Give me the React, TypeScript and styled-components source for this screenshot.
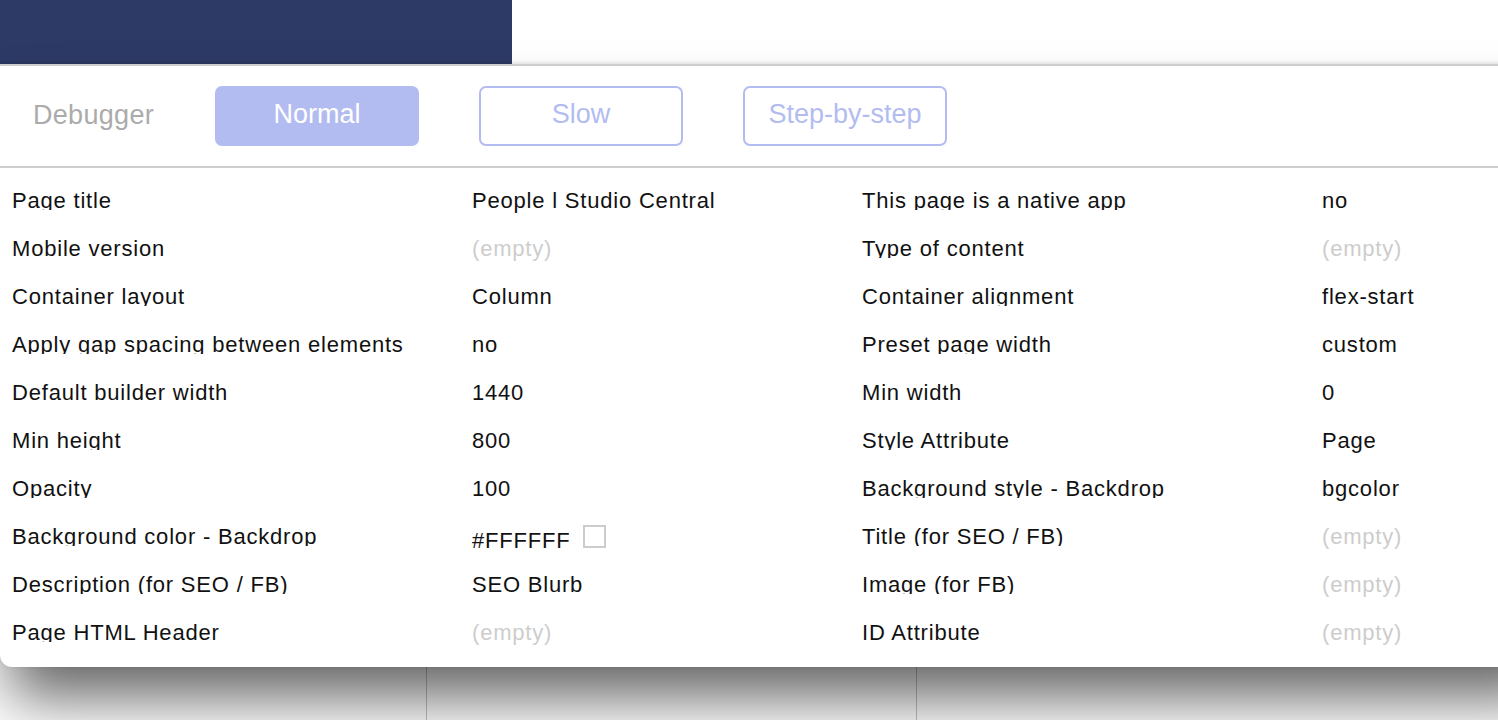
import React from 'react';
import styled, { createGlobalStyle } from 'styled-components';

const GlobalStyle = createGlobalStyle`
  html, body {
    margin: 0;
    padding: 0;
    background: #fff;
  }
  body {
    font-family: 'Liberation Sans', Arial, Helvetica, sans-serif;
    -webkit-font-smoothing: antialiased;
  }
`;

const Page = styled.div`
  position: relative;
  width: 100%;
  height: 720px;
  overflow: hidden;
  background: #fff;
`;

const TopBar = styled.div`
  display: flex;
  height: 64px;
`;

const Brand = styled.div`
  width: 512px;
  background: #2e3a66;
`;

const Columns = styled.div`
  display: grid;
  grid-template-columns: 427px 490px 1fr;
  height: 656px;
`;

const Column = styled.div`
  border-right: 1px solid #c4c4c4;
  &:last-child {
    border-right: none;
  }
`;

const Panel = styled.div`
  position: absolute;
  top: 64px;
  left: 0;
  width: 1560px;
  height: 603px;
  box-sizing: border-box;
  background: #fff;
  border-top: 2px solid #cfcfcf;
  border-bottom-left-radius: 12px;
  box-shadow: 0 -1px 4px rgba(0, 0, 0, 0.12), 0 40px 60px -10px rgba(0, 0, 0, 0.62);
  display: flex;
  flex-direction: column;
  overflow: hidden;
`;

const Header = styled.div`
  display: flex;
  align-items: center;
  gap: 60px;
  height: 100px;
  flex-shrink: 0;
  padding-left: 33px;
  border-bottom: 2px solid #cfcfcf;
`;

const Title = styled.div`
  width: 122px;
  font-size: 27px;
  letter-spacing: 0.3px;
  color: #ababab;
  margin-top: -2px;
`;

const ModeButton = styled.button<{ $active?: boolean }>`
  width: 204px;
  height: 60px;
  box-sizing: border-box;
  border: 2px solid #b3bcf0;
  border-radius: 7px;
  background: ${(p) => (p.$active ? '#b3bcf0' : '#fff')};
  color: ${(p) => (p.$active ? '#fff' : '#b3bcf0')};
  font-family: 'Liberation Sans', Arial, sans-serif;
  font-size: 27px;
  padding: 0 0 3px;
  cursor: pointer;
`;

const Body = styled.div`
  display: grid;
  grid-template-columns: 460px 390px 460px 390px;
  grid-auto-rows: 48px;
  padding: 21px 0 0 12px;
  font-size: 22px;
  letter-spacing: 0.8px;
  line-height: 24px;
  color: #111;
`;

const Label = styled.div`
  height: 21px;
  overflow: hidden;
  white-space: nowrap;
`;

const Value = styled.div<{ $empty?: boolean }>`
  white-space: nowrap;
  color: ${(p) => (p.$empty ? '#cdcdcd' : '#111')};
`;

const Swatch = styled.span<{ $color: string }>`
  display: inline-block;
  width: 23px;
  height: 23px;
  box-sizing: border-box;
  margin-left: 13px;
  border: 2px solid #cccccc;
  background: ${(p) => p.$color};
`;

type Field = { label: string; value?: string; swatch?: string };

const rows: [Field, Field][] = [
  [{ label: 'Page title', value: 'People l Studio Central' }, { label: 'This page is a native app', value: 'no' }],
  [{ label: 'Mobile version' }, { label: 'Type of content' }],
  [{ label: 'Container layout', value: 'Column' }, { label: 'Container alignment', value: 'flex-start' }],
  [{ label: 'Apply gap spacing between elements', value: 'no' }, { label: 'Preset page width', value: 'custom' }],
  [{ label: 'Default builder width', value: '1440' }, { label: 'Min width', value: '0' }],
  [{ label: 'Min height', value: '800' }, { label: 'Style Attribute', value: 'Page' }],
  [{ label: 'Opacity', value: '100' }, { label: 'Background style - Backdrop', value: 'bgcolor' }],
  [{ label: 'Background color - Backdrop', value: '#FFFFFF', swatch: '#FFFFFF' }, { label: 'Title (for SEO / FB)' }],
  [{ label: 'Description (for SEO / FB)', value: 'SEO Blurb' }, { label: 'Image (for FB)' }],
  [{ label: 'Page HTML Header' }, { label: 'ID Attribute' }],
];

function Cell({ field }: { field: Field }) {
  return (
    <>
      <Label>{field.label}</Label>
      <Value $empty={!field.value}>
        {field.value ?? '(empty)'}
        {field.swatch && <Swatch $color={field.swatch} />}
      </Value>
    </>
  );
}

export default function App() {
  return (
    <>
      <GlobalStyle />
      <Page>
        <TopBar>
          <Brand />
        </TopBar>
        <Columns>
          <Column />
          <Column />
          <Column />
        </Columns>
        <Panel>
          <Header>
            <Title>Debugger</Title>
            <ModeButton $active>Normal</ModeButton>
            <ModeButton>Slow</ModeButton>
            <ModeButton>Step-by-step</ModeButton>
          </Header>
          <Body>
            {rows.map(([left, right], i) => (
              <React.Fragment key={i}>
                <Cell field={left} />
                <Cell field={right} />
              </React.Fragment>
            ))}
          </Body>
        </Panel>
      </Page>
    </>
  );
}
